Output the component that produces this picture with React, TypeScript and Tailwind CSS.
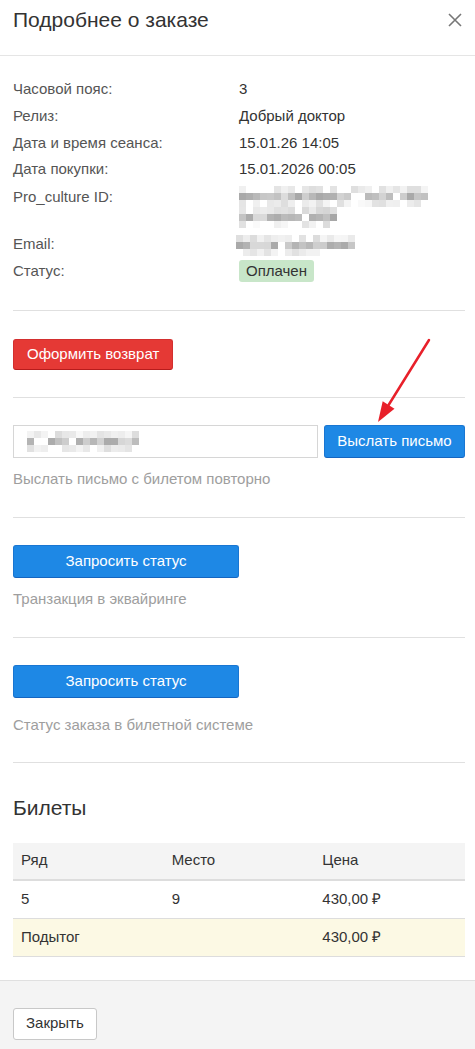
import React from 'react';

// pseudo-random grey for the pixelated (hidden) data
const rnd = (n: number) => {
  const x = Math.sin(n * 12.9898 + 78.233) * 43758.5453;
  return x - Math.floor(x);
};

type Tone = 'light' | 'dark' | 'mid';

const Mosaic: React.FC<{ rows: { cells: number; tone: Tone }[]; seed: number; cell?: number }> = ({ rows, seed, cell = 7 }) => {
  const maxCells = Math.max(...rows.map((r) => r.cells));
  const rects: React.ReactNode[] = [];
  rows.forEach((r, y) => {
    for (let x = 0; x < r.cells; x++) {
      const v = rnd(seed + y * 97 + x * 13);
      let g: number;
      if (r.tone === 'dark') g = 165 + Math.floor(v * 70);
      else if (r.tone === 'mid') g = 195 + Math.floor(v * 50);
      else g = 220 + Math.floor(v * 35);
      if (v > 0.88) g = 255;
      rects.push(<rect key={`${x}-${y}`} x={x * cell} y={y * cell} width={cell} height={cell} fill={`rgb(${g},${g},${g})`} />);
    }
  });
  return (
    <svg width={maxCells * cell} height={rows.length * cell} className="block">
      {rects}
    </svg>
  );
};

const Row: React.FC<{ label: string; children: React.ReactNode; className?: string }> = ({ label, children, className }) => (
  <div className={`flex ${className ?? 'h-[26.75px] items-center'}`}>
    <div className="w-[226px] shrink-0 text-[#555]">{label}</div>
    <div className="text-[#333]">{children}</div>
  </div>
);

const BlueButton: React.FC<{ children: React.ReactNode; className?: string }> = ({ children, className }) => (
  <button className={`bg-[#1e88e5] text-white border border-[#1976d2] border-b-[#1565c0] rounded-[3px] text-[15px] ${className ?? ''}`}>
    {children}
  </button>
);

const Divider = () => <div className="h-px bg-[#e0e0e0]" />;

export default function App() {
  return (
    <div className="relative w-[475px] min-h-[1049px] bg-white text-[15px] text-[#333]" style={{ fontFamily: '"Liberation Sans", Arial, sans-serif' }}>
      {/* header */}
      <div className="h-[56px] flex items-center justify-between px-[13px] border-b border-[#e5e5e5]">
        <h1 className="text-[21px] leading-none text-[#333] -mt-[16px]">Подробнее о заказе</h1>
        <svg width="16" height="16" viewBox="0 0 16 16" className="-mt-[16px] -mr-[1px]">
          <path d="M2 2L14 14M14 2L2 14" stroke="#777" strokeWidth="1.6" />
        </svg>
      </div>

      <div className="pl-[13px] pr-[10px]">
        {/* details */}
        <div className="pt-[20px] pb-[25px]">
          <Row label="Часовой пояс:">3</Row>
          <Row label="Релиз:">Добрый доктор</Row>
          <Row label="Дата и время сеанса:">15.01.26 14:05</Row>
          <Row label="Дата покупки:">15.01.2026 00:05</Row>
          <Row label="Pro_culture ID:" className="h-[48px] items-start pt-[3px]">
            <Mosaic
              seed={11}
              rows={[
                { cells: 27, tone: 'light' },
                { cells: 27, tone: 'dark' },
                { cells: 26, tone: 'light' },
                { cells: 14, tone: 'mid' },
                { cells: 14, tone: 'dark' },
                { cells: 13, tone: 'light' },
              ]}
            />
          </Row>
          <Row label="Email:" className="h-[26.75px] items-center">
            <div className="-ml-[3px] mt-[2px]">
              <Mosaic
                seed={47}
                rows={[
                  { cells: 17, tone: 'light' },
                  { cells: 17, tone: 'dark' },
                  { cells: 12, tone: 'light' },
                ]}
              />
            </div>
          </Row>
          <Row label="Статус:">
            <span className="inline-block bg-[#c8e6c9] rounded-[3px] px-[7px] leading-[22px] mt-[1px]">Оплачен</span>
          </Row>
        </div>

        <Divider />

        {/* refund */}
        <div className="pt-[28px] pb-[27px]">
          <button className="h-[31px] px-[13px] bg-[#e53935] text-white border border-[#d32f2f] border-b-[#b71c1c] rounded-[3px] text-[15px]">
            Оформить возврат
          </button>
        </div>

        <Divider />

        {/* resend letter */}
        <div className="pt-[27px] pb-[28px]">
          <div className="flex gap-[6px]">
            <div className="w-[305px] h-[33px] border border-[#d6d6d6] flex items-center pl-[13px]">
              <Mosaic
                seed={83}
                rows={[
                  { cells: 16, tone: 'light' },
                  { cells: 16, tone: 'dark' },
                  { cells: 16, tone: 'light' },
                ]}
              />
            </div>
            <BlueButton className="w-[141px] h-[33px]">Выслать письмо</BlueButton>
          </div>
          <p className="mt-[11px] leading-[20px] text-[#9e9e9e]">Выслать письмо с билетом повторно</p>
        </div>

        <Divider />

        {/* acquiring status */}
        <div className="pt-[27px] pb-[28px]">
          <BlueButton className="w-[226px] h-[33px]">Запросить статус</BlueButton>
          <p className="mt-[11px] leading-[20px] text-[#9e9e9e]">Транзакция в эквайринге</p>
        </div>

        <Divider />

        {/* ticket system status */}
        <div className="pt-[27px] pb-[27px]">
          <BlueButton className="w-[226px] h-[33px]">Запросить статус</BlueButton>
          <p className="mt-[17px] leading-[20px] text-[#9e9e9e]">Статус заказа в билетной системе</p>
        </div>

        <Divider />

        {/* tickets */}
        <h2 className="text-[21px] leading-[24px] text-[#333] mt-[33px] mb-[23px]">Билеты</h2>
        <div>
          <div className="grid grid-cols-3 bg-[#f4f4f4] h-[38px] items-center border-b-2 border-[#dddddd]">
            <div className="pl-[8px]">Ряд</div>
            <div className="pl-[8px]">Место</div>
            <div className="pl-[8px]">Цена</div>
          </div>
          <div className="grid grid-cols-3 h-[38px] items-center border-b border-[#dddddd]">
            <div className="pl-[8px]">5</div>
            <div className="pl-[8px]">9</div>
            <div className="pl-[8px]">430,00 ₽</div>
          </div>
          <div className="grid grid-cols-3 h-[38px] items-center border-b border-[#dddddd] bg-[#fcf9e4]">
            <div className="pl-[8px]">Подытог</div>
            <div className="pl-[8px]"></div>
            <div className="pl-[8px]">430,00 ₽</div>
          </div>
        </div>
      </div>

      {/* footer */}
      <div className="mt-[23px] border-t border-[#e0e0e0] bg-[#f4f4f4] px-[13px] pt-[27px] pb-[20px]">
        <button className="h-[32px] px-[12px] bg-white border border-[#c8c8c8] rounded-[3px] text-[15px] text-[#333]">Закрыть</button>
      </div>

      {/* annotation arrow */}
      <svg className="absolute left-[370px] top-[335px]" width="65" height="95" viewBox="0 0 65 95">
        <line x1="59" y1="5" x2="18.6" y2="70" stroke="#e8202a" strokeWidth="2.5" strokeLinecap="round" />
        <polygon points="8,87 24.5,73.7 12.7,66.3" fill="#e8202a" />
      </svg>
    </div>
  );
}
